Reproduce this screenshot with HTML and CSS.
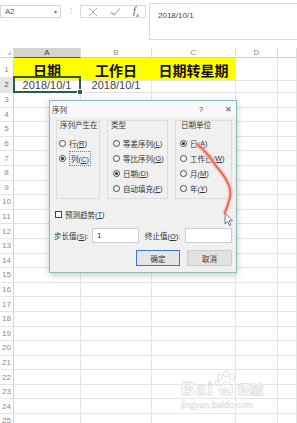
FILE: index.html
```html
<!DOCTYPE html>
<html lang="zh-CN">
<head>
    <meta charset="UTF-8">
    <meta name="viewport" content="width=device-width, initial-scale=1.0">
    <title>序列</title>
    <link rel="stylesheet" href="styles.css">
</head>
<body>
<div class="app">
    <!-- Formula bar -->
    <div class="formula-bar">
        <div class="name-box"><span>A2</span><span class="drop">&#9662;</span></div>
        <div class="sep">&#8942;</div>
        <div class="fx-buttons">
            <svg class="icon" width="10" height="10" viewBox="0 0 10 10"><path d="M1 1 L9 9 M9 1 L1 9" stroke="#a8a8a8" stroke-width="1" fill="none"/></svg>
            <svg class="icon" width="11" height="10" viewBox="0 0 11 10"><path d="M1 5 L4 8 L10 1.5" stroke="#a8a8a8" stroke-width="1.1" fill="none"/></svg>
            <span class="fx">f<sub>x</sub></span>
        </div>
        <div class="formula-input">2018/10/1</div>
    </div>

    <!-- Sheet -->
    <div class="sheet">
        <div class="row head">
            <span class="rh corner"><i></i></span>
            <span class="ch active">A</span>
            <span class="ch">B</span>
            <span class="ch">C</span>
            <span class="ch">D</span>
            <span class="ch"></span>
        </div>
        <div class="row r1">
            <span class="rh">1</span>
            <span class="y">日期</span>
            <span class="y">工作日</span>
            <span class="y last">日期转星期</span>
            <span></span>
            <span></span>
        </div>
        <div class="row r2">
            <span class="rh active">2</span>
            <span class="val selected">2018/10/1</span>
            <span class="val">2018/10/1</span>
            <span></span>
            <span></span>
            <span></span>
        </div>
        <div class="row"><span class="rh">3</span><span></span><span></span><span></span><span></span><span></span></div>
        <div class="row"><span class="rh">4</span><span></span><span></span><span></span><span></span><span></span></div>
        <div class="row"><span class="rh">5</span><span></span><span></span><span></span><span></span><span></span></div>
        <div class="row"><span class="rh">6</span><span></span><span></span><span></span><span></span><span></span></div>
        <div class="row"><span class="rh">7</span><span></span><span></span><span></span><span></span><span></span></div>
        <div class="row"><span class="rh">8</span><span></span><span></span><span></span><span></span><span></span></div>
        <div class="row"><span class="rh">9</span><span></span><span></span><span></span><span></span><span></span></div>
        <div class="row"><span class="rh">10</span><span></span><span></span><span></span><span></span><span></span></div>
        <div class="row"><span class="rh">11</span><span></span><span></span><span></span><span></span><span></span></div>
        <div class="row"><span class="rh">12</span><span></span><span></span><span></span><span></span><span></span></div>
        <div class="row"><span class="rh">13</span><span></span><span></span><span></span><span></span><span></span></div>
        <div class="row"><span class="rh">14</span><span></span><span></span><span></span><span></span><span></span></div>
        <div class="row"><span class="rh">15</span><span></span><span></span><span></span><span></span><span></span></div>
        <div class="row"><span class="rh">16</span><span></span><span></span><span></span><span></span><span></span></div>
        <div class="row"><span class="rh">17</span><span></span><span></span><span></span><span></span><span></span></div>
        <div class="row"><span class="rh">18</span><span></span><span></span><span></span><span></span><span></span></div>
        <div class="row"><span class="rh">19</span><span></span><span></span><span></span><span></span><span></span></div>
        <div class="row"><span class="rh">20</span><span></span><span></span><span></span><span></span><span></span></div>
        <div class="row"><span class="rh">21</span><span></span><span></span><span></span><span></span><span></span></div>
        <div class="row"><span class="rh">22</span><span></span><span></span><span></span><span></span><span></span></div>
        <div class="row"><span class="rh">23</span><span></span><span></span><span></span><span></span><span></span></div>
        <div class="row"><span class="rh">24</span><span></span><span></span><span></span><span></span><span></span></div>
        <div class="row"><span class="rh">25</span><span></span><span></span><span></span><span></span><span></span></div>
    </div>

    <!-- Series dialog -->
    <div class="dialog">
        <div class="dlg-title">
            <span>序列</span>
            <span class="dlg-btns"><span>?</span><span class="close">&#10005;</span></span>
        </div>
        <div class="groups">
            <div class="group g1">
                <div class="legend">序列产生在</div>
                <div class="opt"><i class="radio"></i>行(<u>R</u>)</div>
                <div class="opt"><i class="radio on"></i><span class="focus">列(<u>C</u>)</span></div>
            </div>
            <div class="group g2">
                <div class="legend">类型</div>
                <div class="opt"><i class="radio"></i>等差序列(<u>L</u>)</div>
                <div class="opt"><i class="radio"></i>等比序列(<u>G</u>)</div>
                <div class="opt"><i class="radio on"></i>日期(<u>D</u>)</div>
                <div class="opt"><i class="radio"></i>自动填充(<u>F</u>)</div>
            </div>
            <div class="group g3">
                <div class="legend">日期单位</div>
                <div class="opt"><i class="radio on"></i>日(<u>A</u>)</div>
                <div class="opt"><i class="radio"></i>工作日(<u>W</u>)</div>
                <div class="opt"><i class="radio"></i>月(<u>M</u>)</div>
                <div class="opt"><i class="radio"></i>年(<u>Y</u>)</div>
            </div>
        </div>
        <div class="check-row"><i class="checkbox"></i>预测趋势(<u>T</u>)</div>
        <div class="fields">
            <span class="lbl">步长值(<u>S</u>):</span>
            <input class="field" type="text" value="1">
            <span class="lbl lbl2">终止值(<u>O</u>):</span>
            <input class="field" type="text" value="">
        </div>
        <div class="buttons">
            <button class="btn primary">确定</button>
            <button class="btn">取消</button>
        </div>
    </div>

    <!-- hand-drawn annotation + mouse pointer -->
    <svg class="annot" width="297" height="423" viewBox="0 0 297 423">
        <path d="M197 144 Q207 152 216 166 Q233 185 230 197 Q228 206 225 212" stroke="#f6c2ba" stroke-width="5" fill="none" stroke-linecap="round" opacity="0.7"/>
        <path d="M197 144 Q207 152 216 166 Q233 185 230 197 Q228 206 225 212" stroke="#e66a5a" stroke-width="2" fill="none" stroke-linecap="round"/>
        <path d="M225 213 L225 224 L227.5 221.5 L229.5 225.5 L231 224.8 L229 220.8 L232.5 220.8 Z" fill="#fff" stroke="#444" stroke-width="0.7" stroke-linejoin="round"/>
    </svg>

    <!-- watermark -->
    <div class="watermark">
        <div class="wm-logo">
            <span class="wm-bai">Bai</span>
            <svg width="24" height="28" viewBox="0 0 24 28">
                <g fill="none" stroke="#dedede" stroke-width="1">
                    <ellipse cx="6" cy="7" rx="2.5" ry="3"/>
                    <ellipse cx="12" cy="4" rx="2.5" ry="3"/>
                    <ellipse cx="18" cy="7" rx="2.5" ry="3"/>
                    <ellipse cx="3" cy="13" rx="2" ry="2.5"/>
                    <path d="M5 22 C5 15 9 12 12 12 C15 12 19 15 19 22 C19 26 5 26 5 22 Z"/>
                </g>
                <text x="12" y="23" text-anchor="middle" class="wm-du">du</text>
            </svg>
            <span class="wm-cn">经验</span>
        </div>
        <div class="wm-url">jingyan.baidu.com</div>
    </div>
</div>
</body>
</html>
```

FILE: styles.css
```css
body {
    margin: 0;
    padding: 0;
    background-color: #fff;
    font-family: "Liberation Sans", "Noto Sans CJK SC", sans-serif;
    color: #333;
}
.app {
    position: relative;
    width: 297px;
    height: 423px;
    overflow: hidden;
}

/* formula bar */
.formula-bar {
    display: flex;
    align-items: flex-start;
    height: 48px;
    padding-top: 3px;
    box-sizing: border-box;
}
.name-box {
    display: flex;
    justify-content: space-between;
    align-items: center;
    width: 61px;
    height: 13px;
    margin-top: 2px;
    padding: 0 3px 0 4px;
    box-sizing: border-box;
    border: 1px solid #d6d6d6;
    font-size: 8px;
    color: #555;
}
.name-box .drop {
    font-size: 6px;
    color: #777;
}
.sep {
    width: 19px;
    margin-top: 3px;
    text-align: center;
    font-size: 8px;
    color: #b0b0b0;
}
.fx-buttons {
    display: flex;
    align-items: center;
    justify-content: space-between;
    width: 66px;
    height: 13px;
    margin-top: 2px;
    padding: 0 6px 0 7px;
    box-sizing: border-box;
    border: 1px solid #dadada;
}
.fx {
    font-family: "Liberation Serif", serif;
    font-style: italic;
    font-size: 10px;
    color: #555;
}
.fx sub {
    font-size: 7px;
}
.formula-input {
    flex: 1;
    height: 37px;
    margin-left: 3px;
    padding: 7px 0 0 8px;
    box-sizing: border-box;
    border: 1px solid #dadada;
    border-right: none;
    font-size: 8px;
    color: #444;
}

/* sheet grid */
.row {
    display: grid;
    grid-template-columns: 14px 67px 71px 84px 42px 1fr;
    height: 14.6px;
}
.row > span {
    box-sizing: border-box;
    border-right: 1px solid #e4e4e4;
    border-bottom: 1px solid #e4e4e4;
}
.row .rh {
    display: flex;
    align-items: center;
    justify-content: center;
    border-right-color: #d4d4d4;
    font-size: 8px;
    color: #8a8a8a;
}
.row .rh.active {
    background-color: #e6e6e6;
    color: #555;
}
.row.head {
    height: 10px;
}
.row.head > span {
    border-bottom-color: #d0d0d0;
    border-right-color: #dcdcdc;
}
.ch {
    display: flex;
    align-items: center;
    justify-content: center;
    font-size: 8px;
    color: #8a8a8a;
}
.ch.active {
    background-color: #d4d4d4;
    color: #444;
    border-bottom: 1px solid #217346 !important;
}
.rh.corner {
    align-items: flex-end;
    justify-content: flex-end;
    padding: 0 2px 2px 0;
}
.rh.corner i {
    width: 0;
    height: 0;
    border-left: 4px solid transparent;
    border-bottom: 4px solid #c8c8c8;
}
.row.r1 {
    height: 19px;
}
.r1 .y {
    display: flex;
    align-items: center;
    justify-content: center;
    padding-top: 2px;
    background-color: #ffff00;
    border-right-color: #ffff00;
    font-family: "Noto Sans CJK SC", sans-serif;
    font-weight: bold;
    font-size: 14px;
    color: #111;
}
.r1 .y.last {
    border-right-color: #e4e4e4;
}
.row.r2 {
    height: 16px;
}
.r2 .val {
    display: flex;
    align-items: center;
    justify-content: center;
    font-size: 11px;
    color: #444;
}
.r2 .selected {
    position: relative;
}
.r2 .selected::after {
    content: "";
    position: absolute;
    left: -1px;
    top: -1px;
    right: -1px;
    bottom: -1px;
    border: 2px solid #2f5c48;
}
.r2 .selected::before {
    content: "";
    position: absolute;
    right: -3px;
    bottom: -3px;
    width: 4px;
    height: 4px;
    background-color: #2f5c48;
    border: 1px solid #fff;
    z-index: 1;
}

/* dialog */
.dialog {
    position: absolute;
    left: 49px;
    top: 100px;
    width: 188px;
    height: 173px;
    box-sizing: border-box;
    border: 1px solid #8dbaba;
    background-color: #f0f0f0;
    box-shadow: 0 2px 7px rgba(0, 0, 0, 0.22);
    font-size: 7.5px;
    color: #333;
}
.dlg-title {
    display: flex;
    justify-content: space-between;
    align-items: center;
    height: 16px;
    padding: 0 0 0 2px;
    background-color: #f8f8f8;
}
.dlg-btns {
    display: flex;
    align-items: center;
}
.dlg-btns span {
    width: 16px;
    text-align: center;
    margin-left: 11px;
}
.dlg-btns .close {
    font-size: 8px;
    color: #555;
}
.groups {
    display: flex;
    gap: 7px;
    margin-top: 3px;
    padding-left: 6px;
}
.group {
    height: 79px;
    box-sizing: border-box;
    border: 1px solid #dcdcdc;
    padding-left: 3px;
}
.g1 { width: 44px; padding-left: 2px; }
.g2 { width: 61px; padding-left: 5px; }
.g3 { width: 57px; padding-left: 4px; }
.legend {
    height: 9px;
    line-height: 9px;
    margin-left: 1px;
    margin-bottom: 6px;
}
.g2 .legend { margin-left: -2px; }
.opt {
    display: flex;
    align-items: center;
    height: 15px;
    white-space: nowrap;
}
.radio {
    display: flex;
    align-items: center;
    justify-content: center;
    width: 7px;
    height: 7px;
    margin-right: 3px;
    box-sizing: border-box;
    border: 1px solid #444;
    border-radius: 50%;
    background-color: #fff;
}
.radio.on::after {
    content: "";
    width: 3px;
    height: 3px;
    border-radius: 50%;
    background-color: #222;
}
.focus {
    padding: 1px 1px;
    border: 1px dotted #777;
}
u {
    text-decoration: underline;
    text-underline-offset: 1px;
}
.check-row {
    display: flex;
    align-items: center;
    height: 10px;
    margin-top: 10px;
    padding-left: 5px;
}
.checkbox {
    width: 7px;
    height: 7px;
    margin-right: 3px;
    box-sizing: border-box;
    border: 1px solid #444;
    background-color: #fff;
}
.fields {
    display: flex;
    align-items: center;
    height: 15px;
    margin-top: 9px;
    padding-left: 4px;
}
.lbl {
    width: 38px;
    white-space: nowrap;
}
.lbl2 {
    width: 40px;
    margin-left: 6px;
}
.field {
    width: 47px;
    height: 15px;
    margin: 0;
    padding: 0 4px;
    box-sizing: border-box;
    border: 1px solid #cfcfcf;
    background-color: #fff;
    font-family: "Liberation Sans", sans-serif;
    font-size: 8px;
    color: #333;
    outline: none;
}
.buttons {
    display: flex;
    justify-content: flex-end;
    gap: 7px;
    margin-top: 7px;
    padding-right: 4px;
}
.btn {
    width: 44px;
    height: 16px;
    padding: 0;
    box-sizing: border-box;
    border: 1px solid #cdcdcd;
    background-color: #e1e1e1;
    font-family: "Noto Sans CJK SC", sans-serif;
    font-size: 7.5px;
    color: #333;
}
.btn.primary {
    border: 1.5px solid #3b78c2;
    background-color: #e5e5e5;
}
.btn + .btn {
    width: 45px;
}

/* overlays */
.annot {
    position: absolute;
    left: 0;
    top: 0;
    pointer-events: none;
}
.watermark {
    position: absolute;
    left: 181px;
    top: 368px;
    width: 88px;
    color: #fff;
}
.wm-logo {
    display: flex;
    align-items: flex-end;
    height: 30px;
}
.wm-bai {
    font-size: 19px;
    font-weight: bold;
    letter-spacing: 1px;
    line-height: 19px;
    -webkit-text-stroke: 0.8px #dcdcdc;
}
.wm-du {
    font-family: "Liberation Sans", sans-serif;
    font-size: 8px;
    font-weight: bold;
    fill: #fff;
    stroke: #dcdcdc;
    stroke-width: 0.5;
}
.wm-cn {
    font-family: "Noto Sans CJK SC", sans-serif;
    font-size: 13px;
    line-height: 18px;
    font-weight: bold;
    -webkit-text-stroke: 0.6px #dcdcdc;
}
.wm-url {
    margin-top: 2px;
    font-size: 8.5px;
    letter-spacing: 0.2px;
    -webkit-text-stroke: 0.5px #dedede;
}
```
